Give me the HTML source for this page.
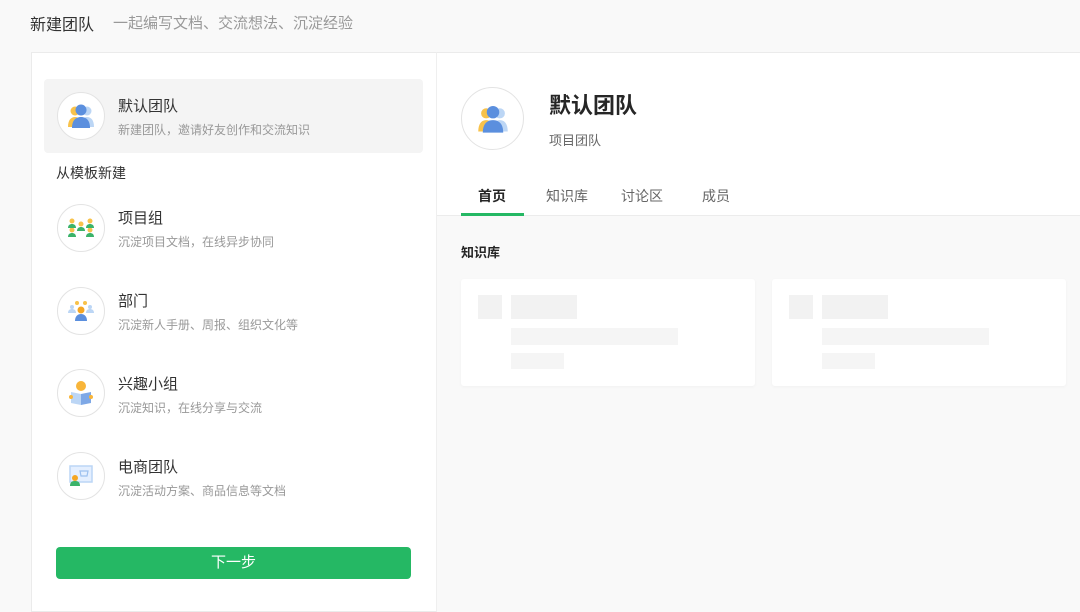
<!DOCTYPE html>
<html><head><meta charset="utf-8"><style>
*{margin:0;padding:0;box-sizing:border-box}
body{width:1080px;height:603px;overflow:hidden;background:#f9f9f9;font-family:"Liberation Sans","Noto Sans CJK SC",sans-serif;position:relative}
.a{position:absolute}
.hd{left:30px;top:11px;font-size:16px;color:#333}
.hd2{left:113px;top:12px;font-size:15px;color:#999}
.left{left:31px;top:52px;width:406px;height:560px;background:#fff;border:1px solid #ebebeb;border-right:1px solid #efefef}
.rtop{left:437px;top:52px;width:643px;height:164px;background:#fff;border-top:1px solid #ebebeb;border-bottom:1px solid #ececec}
.circ{width:48px;height:48px;border-radius:50%;border:1px solid #e3e3e3;background:#fff;display:flex;align-items:center;justify-content:center}
.t{font-size:15px;color:#333}
.d{font-size:12px;color:#999}
.sk{background:#f2f2f2}
.card{width:294px;height:107px;background:#fff;border-radius:3px;box-shadow:0 1px 3px rgba(0,0,0,.04)}
.tab{top:186px;font-size:14px;color:#666}
</style></head><body>
<div class="a hd">新建团队</div>
<div class="a hd2">一起编写文档、交流想法、沉淀经验</div>
<div class="a left"></div>
<div class="a rtop"></div>

<div class="a" style="left:44px;top:79px;width:379px;height:74px;background:#f4f4f4;border-radius:4px"></div>
<div class="a circ" style="left:57px;top:92px"><svg width="30" height="26" viewBox="0 0 30 26"><circle cx="9" cy="8" r="4.5" fill="#f8c24a"/><path d="M2 24c0-7 3-10 7-10s7 3 7 10z" fill="#f8c24a"/><circle cx="21" cy="8" r="4.5" fill="#bcd6f5"/><path d="M14 24c0-7 3-10 7-10s7 3 7 10z" fill="#bcd6f5"/><circle cx="15" cy="7" r="5.5" fill="#5b8fde"/><path d="M6 25c0-8 4-11 9-11s9 3 9 11z" fill="#5b8fde"/></svg></div>
<div class="a t" style="left:118px;top:95px">默认团队</div>
<div class="a d" style="left:118px;top:121px">新建团队，邀请好友创作和交流知识</div>
<div class="a" style="left:56px;top:163px;font-size:14px;color:#333">从模板新建</div>

<div class="a circ" style="left:57px;top:204px"><svg width="28" height="22" viewBox="0 0 28 22"><g fill="#f8c24a"><circle cx="5" cy="4" r="2.5"/><circle cx="23" cy="4" r="2.5"/><circle cx="14" cy="7" r="2.5"/><circle cx="5" cy="13" r="2.5"/><circle cx="23" cy="13" r="2.5"/></g><g fill="#3bb36a"><path d="M1 11c0-3 2-4 4-4s4 1 4 4z"/><path d="M19 11c0-3 2-4 4-4s4 1 4 4z"/><path d="M10 14c0-3 2-4 4-4s4 1 4 4z"/><path d="M1 20c0-3 2-4 4-4s4 1 4 4z"/><path d="M19 20c0-3 2-4 4-4s4 1 4 4z"/></g></svg></div>
<div class="a t" style="left:118px;top:207px">项目组</div>
<div class="a d" style="left:118px;top:233px">沉淀项目文档，在线异步协同</div>

<div class="a circ" style="left:57px;top:287px"><svg width="28" height="22" viewBox="0 0 28 22"><g fill="#f8c24a"><circle cx="10" cy="3" r="2"/><circle cx="18" cy="3" r="2"/></g><g fill="#bcd6f5"><circle cx="5" cy="7" r="2"/><path d="M1 13c0-3 2-4 4-4s4 1 4 4z"/><circle cx="23" cy="7" r="2"/><path d="M19 13c0-3 2-4 4-4s4 1 4 4z"/></g><circle cx="14" cy="10" r="3.5" fill="#f5a623"/><path d="M8 21c0-5 3-7 6-7s6 2 6 7z" fill="#5b8fde"/></svg></div>
<div class="a t" style="left:118px;top:290px">部门</div>
<div class="a d" style="left:118px;top:316px">沉淀新人手册、周报、组织文化等</div>

<div class="a circ" style="left:57px;top:369px"><svg width="28" height="26" viewBox="0 0 28 26"><circle cx="14" cy="6" r="5" fill="#f8b53a"/><path d="M4 12l10 2v11l-10-2z" fill="#bcd6f5"/><path d="M24 12l-10 2v11l10-2z" fill="#7ea8e6"/><circle cx="4" cy="17" r="2" fill="#f8b53a"/><circle cx="24" cy="17" r="2" fill="#f8b53a"/></svg></div>
<div class="a t" style="left:118px;top:373px">兴趣小组</div>
<div class="a d" style="left:118px;top:399px">沉淀知识，在线分享与交流</div>

<div class="a circ" style="left:57px;top:452px"><svg width="28" height="24" viewBox="0 0 28 24"><rect x="3" y="2" width="22" height="16" fill="#e4efff" stroke="#bcd6f5" stroke-width="1.5"/><path d="M13 7h8l-1 5h-6z" fill="none" stroke="#9cc0ef" stroke-width="1.2"/><circle cx="8" cy="14" r="3" fill="#f5a623"/><path d="M3 22c0-4 2-5 5-5s5 1 5 5z" fill="#3bb36a"/></svg></div>
<div class="a t" style="left:118px;top:456px">电商团队</div>
<div class="a d" style="left:118px;top:482px">沉淀活动方案、商品信息等文档</div>

<div class="a" style="left:56px;top:547px;width:355px;height:32px;background:#25b864;border-radius:4px;color:#fff;font-size:15px;text-align:center;line-height:32px">下一步</div>

<div class="a" style="left:461px;top:87px;width:63px;height:63px;border-radius:50%;border:1px solid #e3e3e3;background:#fff;display:flex;align-items:center;justify-content:center"><svg width="34" height="30" viewBox="0 0 30 26"><circle cx="9" cy="8" r="4.5" fill="#f8c24a"/><path d="M2 24c0-7 3-10 7-10s7 3 7 10z" fill="#f8c24a"/><circle cx="21" cy="8" r="4.5" fill="#bcd6f5"/><path d="M14 24c0-7 3-10 7-10s7 3 7 10z" fill="#bcd6f5"/><circle cx="15" cy="7" r="5.5" fill="#5b8fde"/><path d="M6 25c0-8 4-11 9-11s9 3 9 11z" fill="#5b8fde"/></svg></div>
<div class="a" style="left:549px;top:88px;font-size:22px;font-weight:bold;color:#262626">默认团队</div>
<div class="a" style="left:549px;top:130px;font-size:13px;color:#666">项目团队</div>
<div class="a tab" style="left:478px;color:#262626;font-weight:bold">首页</div>
<div class="a tab" style="left:546px">知识库</div>
<div class="a tab" style="left:621px">讨论区</div>
<div class="a tab" style="left:702px">成员</div>
<div class="a" style="left:461px;top:213px;width:63px;height:3px;background:#25b864"></div>
<div class="a" style="left:461px;top:242px;font-size:13px;font-weight:bold;color:#262626">知识库</div>

<div class="a card" style="left:461px;top:279px"></div>
<div class="a sk" style="left:478px;top:295px;width:24px;height:24px"></div>
<div class="a sk" style="left:511px;top:295px;width:66px;height:24px"></div>
<div class="a sk" style="left:511px;top:328px;width:167px;height:17px;background:#f5f5f5"></div>
<div class="a sk" style="left:511px;top:353px;width:53px;height:16px;background:#f5f5f5"></div>
<div class="a card" style="left:772px;top:279px"></div>
<div class="a sk" style="left:789px;top:295px;width:24px;height:24px"></div>
<div class="a sk" style="left:822px;top:295px;width:66px;height:24px"></div>
<div class="a sk" style="left:822px;top:328px;width:167px;height:17px;background:#f5f5f5"></div>
<div class="a sk" style="left:822px;top:353px;width:53px;height:16px;background:#f5f5f5"></div>
</body></html>
